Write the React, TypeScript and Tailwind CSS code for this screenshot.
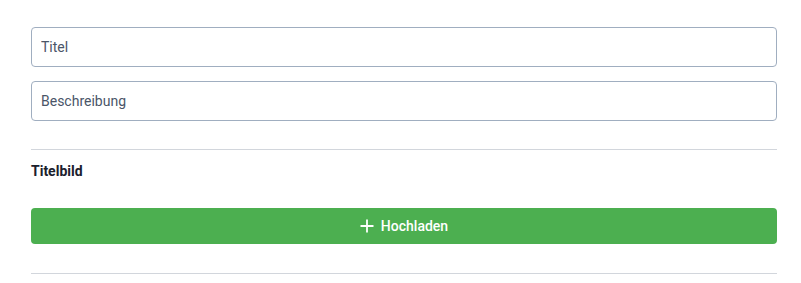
import React from "react";

const PlusIcon = () => (
    <svg width="14" height="14" viewBox="0 0 14 14" fill="none" stroke="currentColor" strokeWidth="1.8">
        <path d="M7 0.5v13M0.5 7h13" />
    </svg>
);

const App: React.FC = () => {
    return (
        <div className="w-[801px] h-[283px] bg-white font-['Roboto',sans-serif] pt-[27px] pl-[31px] pr-[24px]">
            <div className="flex flex-col gap-[14px]">
                <input
                    placeholder="Titel"
                    className="h-[40px] w-full border border-[#a0aec0] rounded-[4px] px-[9px] text-[14px] text-[#4a5568] placeholder:text-[#4a5568] outline-none"
                />
                <input
                    placeholder="Beschreibung"
                    className="h-[40px] w-full border border-[#a0aec0] rounded-[4px] px-[9px] text-[14px] text-[#4a5568] placeholder:text-[#4a5568] outline-none"
                />
            </div>

            <div className="mt-[28px] border-t border-[#d2d6dc]" />

            <div className="mt-[11px] text-[14px] font-bold text-[#1a202c] leading-[20px]">Titelbild</div>

            <button className="mt-[27px] h-[36px] w-full bg-[#4caf50] rounded-[4px] flex items-center justify-center gap-[7px] text-white text-[14px] font-medium">
                <PlusIcon />
                <span>Hochladen</span>
            </button>

            <div className="mt-[29px] border-t border-[#d2d6dc]" />
        </div>
    );
};

export default App;
